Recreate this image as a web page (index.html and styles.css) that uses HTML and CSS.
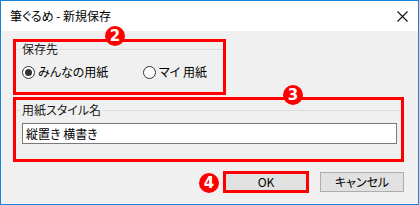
FILE: index.html
```html
<!DOCTYPE html>
<html lang="ja">
<head>
  <meta charset="UTF-8" />
  <title>筆ぐるめ - 新規保存</title>
  <link rel="stylesheet" href="styles.css">
</head>
<body>

<div class="window">
  <!-- タイトルバー -->
  <div class="titlebar">
    <span class="title">筆ぐるめ - 新規保存</span>
    <span class="close">
      <svg width="11" height="11" viewBox="0 0 11 11"><path d="M0.5 0.5 L10.5 10.5 M10.5 0.5 L0.5 10.5" stroke="#111" stroke-width="1.1" fill="none"/></svg>
    </span>
  </div>

  <div class="content">
    <!-- 保存先 -->
    <div class="mark mark-dest">
      <div class="legend"><span class="line-l"></span><span class="legend-text">保存先</span><span class="line-r"></span></div>
      <div class="radios">
        <label class="radio first"><span class="circle checked"></span>みんなの用紙</label>
        <label class="radio"><span class="circle"></span>マイ 用紙</label>
      </div>
    </div>

    <!-- 用紙スタイル名 -->
    <div class="mark mark-name">
      <div class="legend"><span class="line-l"></span><span class="legend-text">用紙スタイル名</span><span class="line-r"></span></div>
      <div class="textbox">縦置き&nbsp;横書き</div>
    </div>

    <div class="actions">
      <button class="btn btn-ok">OK</button>
      <button class="btn">キャンセル</button>
    </div>
  </div>

  <!-- 番号 -->
  <span class="badge badge-2">2</span>
  <span class="badge badge-3">3</span>
  <span class="badge badge-4">4</span>
</div>

</body>
</html>
```

FILE: styles.css
```css
* {
  margin: 0;
  padding: 0;
  box-sizing: border-box;
}

body {
  font-family: "Noto Sans CJK JP", "Noto Sans", sans-serif;
  font-size: 12px;
  font-feature-settings: "palt";
  color: #000;
  background: #fff;
  overflow: hidden;
}

.window {
  position: relative;
  width: 419px;
  height: 205px;
  border: 1px solid #1883d7;
  display: flex;
  flex-direction: column;
}

.titlebar {
  height: 30px;
  background: #fff;
  display: flex;
  align-items: center;
  justify-content: space-between;
  padding: 0 10px 0 9px;
}

.title {
  font-size: 12px;
  line-height: 14px;
}

.close {
  display: flex;
}

.content {
  flex: 1;
  background: #f0f0f0;
  padding: 8px 14px 0 12px;
}

.mark {
  border: 3px solid #ff0000;
}

.mark-dest {
  width: 213px;
  height: 56px;
  padding-bottom: 13px;
}

.mark-name {
  margin-top: 2px;
  width: 391px;
  height: 65px;
  padding-top: 3px;
}

.legend {
  display: flex;
  align-items: center;
  height: 14px;
}

.line-l {
  width: 4px;
  height: 1px;
  background: #dcdcdc;
  margin-right: 2px;
}

.line-r {
  flex: 1;
  height: 1px;
  background: #dcdcdc;
  margin-left: 2px;
}

.legend-text {
  line-height: 14px;
  color: #1a1a1a;
}

.radios {
  display: flex;
  margin-top: 9px;
  padding-left: 6px;
  height: 14px;
  align-items: center;
}

.radio {
  display: flex;
  align-items: center;
  gap: 3px;
  line-height: 14px;
}

.radio.first {
  width: 121px;
}

.circle {
  width: 13px;
  height: 13px;
  border: 1px solid #333;
  border-radius: 50%;
  background: #fff;
  display: flex;
  align-items: center;
  justify-content: center;
}

.circle.checked::after {
  content: "";
  width: 7px;
  height: 7px;
  border-radius: 50%;
  background: #333;
}

.textbox {
  margin: 6px 4px 0 6px;
  height: 21px;
  background: #fff;
  border: 1px solid #7a7a7a;
  padding-left: 3px;
  line-height: 19px;
}

.actions {
  display: flex;
  justify-content: flex-end;
  gap: 12px;
  margin-top: 10px;
}

.btn {
  width: 84px;
  height: 20px;
  background: #e1e1e1;
  border: 1px solid #adadad;
  font-family: "Noto Sans CJK JP", sans-serif;
  font-weight: normal;
  font-size: 12px;
  font-feature-settings: "palt";
  color: #000;
  line-height: 16px;
}

.btn-ok {
  border-color: #0078d7;
  outline: 3px solid #ff0000;
  outline-offset: -2px;
}

.badge {
  position: absolute;
  width: 20px;
  height: 20px;
  border-radius: 50%;
  background: #ff0000;
  color: #fff;
  font-family: "DejaVu Sans", sans-serif;
  font-weight: bold;
  font-size: 15px;
  line-height: 20px;
  text-align: center;
}

.badge-2 { left: 104px; top: 25px; }
.badge-3 { left: 282px; top: 84px; }
.badge-4 { left: 198px; top: 172px; }
```
